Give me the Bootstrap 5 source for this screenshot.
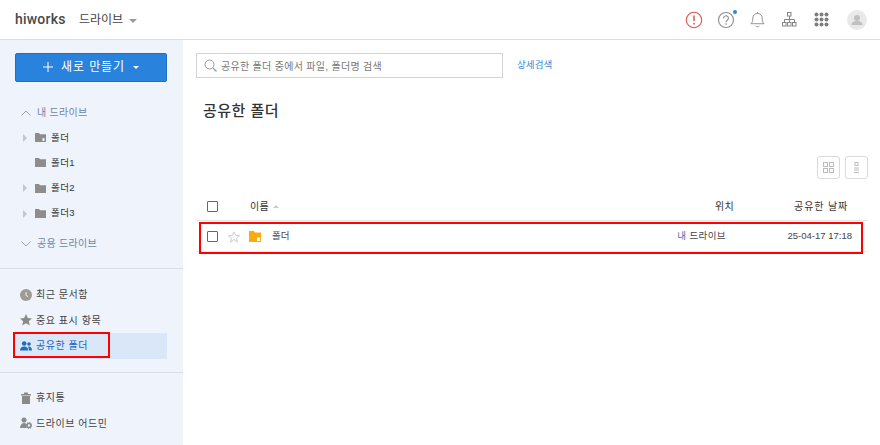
<!DOCTYPE html>
<html lang="ko">
<head>
<meta charset="utf-8">
<title>공유한 폴더</title>
<link href="https://cdn.jsdelivr.net/npm/bootstrap@5.3.0/dist/css/bootstrap.min.css" rel="stylesheet">
<style>
html,body{height:100%;overflow:hidden}
body{font-family:"Liberation Sans","Noto Sans CJK KR",sans-serif;font-size:10px;color:#333;background:#fff}
.top-bar{height:40px;border-bottom:1px solid #ddd;padding:0 13px 0 15px}
.logo-text{font-family:Roboto,"Noto Sans",sans-serif;font-size:14px;font-weight:500;color:#4a4a4a;letter-spacing:.2px;width:64px}
.app-name{font-size:12px;color:#444}
.caret-down{width:0;height:0;border-left:4px solid transparent;border-right:4px solid transparent;border-top:4px solid #999;margin-left:6px;margin-top:2px}
.ticon{display:block}
.page-body{height:405px}
.side-pane{width:183px;background:#eef3fc;flex:none}
.make-btn{margin:13px 16px 0 15px;height:29px;padding:0 0 2px;background:#2982dc;border:1px solid #1d6fc0;border-radius:2px;color:#fff;font-size:12px;letter-spacing:.9px;font-weight:400}
.make-btn .caret-down{border-top-color:#fff;border-left-width:3px;border-right-width:3px;border-top-width:3px;margin-left:8px;margin-top:1px}
.drive-head{height:25px;color:#6f86a3;font-size:10px;padding-left:21px;letter-spacing:.3px}
.drive-head svg{margin-right:6px}
.first-head{margin-top:18px}
.second-head{margin-top:5px}
.folder-row{height:25.3px;padding-left:23px;color:#333;font-size:9.5px;letter-spacing:.4px}
.tri{width:0;height:0;border-top:4px solid transparent;border-bottom:4px solid transparent;border-left:4px solid #c6c6c6;margin-right:8px}
.tri-none{width:4px;margin-right:8px}
.folder-row svg{margin-right:5px}
.side-line{height:1px;background:#d8dfea}
.line-one{margin:12px 0 13px}
.line-two{margin:13.500px 0 12px}
.side-item{height:25.500px;padding-left:20px;color:#444;font-size:10px;margin-right:16px;letter-spacing:.55px}
.side-item svg{margin-right:4px;flex:none}
.side-item.is-current{background:#d9e7f8;color:#1565b8;margin-left:15px;padding-left:5px}
.main-pane{min-width:0;padding:0 12px 0 13px}
.search-box{width:307px;height:25px;border:1px solid #d4d4d4;padding:1px 0 0 7px;color:#777;font-size:10px;letter-spacing:.3px;margin-top:13px}
.search-box svg{margin-right:4px;margin-top:-2px}
.more-link{color:#3d88d5;font-size:9.500px;letter-spacing:.1px;margin-left:14px;margin-top:13px;text-decoration:none;line-height:24px}
.page-title{font-size:15px;font-weight:500;color:#333;letter-spacing:.5px;margin:23px 0 0 7px;line-height:20px}
.view-btns{gap:5px;margin-top:35px}
.view-btn{width:23px;height:23px;border:1px solid #d9d9d9;border-radius:3px}
.list-head{height:30px;margin-top:12px;padding-top:1px;border-bottom:1px solid #e6e6e6;font-size:10px;letter-spacing:.3px;color:#333}
.list-row{height:31px;padding-top:1px;border-bottom:1px solid #eee;font-size:9.500px;color:#444}
.chk{width:11px;height:11px;border:1px solid #666;border-radius:1px;margin-left:11px;flex:none;display:block}
.col-star{width:22px;padding-left:10px;flex:none;line-height:0}
.col-name{flex:1;min-width:0}
.col-place{width:129px;text-align:right}
.col-date{width:114px;text-align:right}
.name-head{margin-left:32px}
.head-place{padding-right:20px}
.head-date{padding-right:20px;letter-spacing:.85px}
.row-place{padding-right:28px;letter-spacing:.4px}
.row-date{padding-right:16px}
.row-folder{margin:0 11px 0 9px}
.mine-tag{color:#3b6fb0}
.sort-up{display:inline-block;width:0;height:0;border-left:3px solid transparent;border-right:3px solid transparent;border-bottom:3px solid #ccc;margin-left:4px;vertical-align:2px}
.mark-a{position:absolute;left:13px;top:332px;width:97px;height:26px;border:2px solid #f00}
.mark-b{position:absolute;left:199px;top:222px;width:664px;height:32px;border:2px solid #f00}
.dot{position:absolute;right:-2px;top:-1px;width:4px;height:4px;border-radius:50%;background:#2a87e0}
.ico-wrap{position:relative;display:block}
.gap-14{margin-right:14px}
.gap-15{margin-right:15px}
.gap-17{margin-right:17px}
.gap-19{margin-right:18px}
</style>
</head>
<body>
<header class="top-bar d-flex align-items-center">
  <span class="logo-text">hiworks</span>
  <span class="app-name">드라이브</span><span class="caret-down"></span>
  <div class="ms-auto d-flex align-items-center">
    <svg class="ticon gap-14" width="18" height="18" viewBox="0 0 18 18"><circle cx="9" cy="9" r="7.700" fill="none" stroke="#e0524f" stroke-width="1.100"/><path d="M9 4.500v5.600" stroke="#e0524f" stroke-width="1.500"/><circle cx="9" cy="12.700" r=".9" fill="#e0524f"/></svg>
    <span class="ico-wrap gap-15"><svg class="ticon" width="18" height="18" viewBox="0 0 18 18"><circle cx="9" cy="9" r="7.500" fill="none" stroke="#8c8c8c" stroke-width="1.100"/><path d="M6.600 7.200a2.400 2.400 0 1 1 3.700 2c-.9.600-1.300 1-1.300 2" fill="none" stroke="#8c8c8c" stroke-width="1.100"/><circle cx="9" cy="13" r=".8" fill="#8c8c8c"/></svg><span class="dot"></span></span>
    <svg class="ticon gap-17" width="15" height="19" viewBox="0 0 16 19"><path d="M1 14c1.500-1.500 2-2.500 2-6a5 5 0 0 1 10 0c0 3.500.5 4.500 2 6z" fill="none" stroke="#8c8c8c"/><path d="M8 3V1.500M6 16.500c1 1 3 1 4 0" fill="none" stroke="#8c8c8c"/></svg>
    <svg class="ticon gap-17" width="15" height="15" viewBox="0 0 15 15"><g fill="none" stroke="#858585"><rect x="5.500" y=".5" width="3.500" height="3.500"/><rect x=".5" y="10.500" width="3.500" height="3.500"/><rect x="5.500" y="10.500" width="3.500" height="3.500"/><rect x="10.500" y="10.500" width="3.500" height="3.500"/><path d="M7.500 4v6.500M2.500 10.500V7.500h10v3"/></g></svg>
    <svg class="ticon gap-19" width="15" height="15" viewBox="0 0 15 15" fill="#7d7d7d"><circle cx="2.500" cy="2.500" r="2"/><circle cx="7.500" cy="2.500" r="2"/><circle cx="12.500" cy="2.500" r="2"/><circle cx="2.500" cy="7.500" r="2"/><circle cx="7.500" cy="7.500" r="2"/><circle cx="12.500" cy="7.500" r="2"/><circle cx="2.500" cy="12.500" r="2"/><circle cx="7.500" cy="12.500" r="2"/><circle cx="12.500" cy="12.500" r="2"/></svg>
    <svg class="ticon" width="20" height="20" viewBox="0 0 20 20"><circle cx="10" cy="10" r="10" fill="#e9e9e9"/><circle cx="10" cy="8" r="3" fill="#c0c0c0"/><path d="M4.500 15c0-3 2.500-4 5.500-4s5.500 1 5.500 4z" fill="#c0c0c0"/></svg>
  </div>
</header>
<div class="page-body d-flex">
  <aside class="side-pane d-flex flex-column">
    <button type="button" class="make-btn d-flex align-items-center justify-content-center">
      <svg width="10" height="10" viewBox="0 0 10 10" class="me-1"><path d="M5 0v10M0 5h10" stroke="#fff"/></svg>
      <span class="ms-1">새로 만들기</span><span class="caret-down"></span>
    </button>
    <div class="drive-head first-head d-flex align-items-center"><svg width="10" height="6" viewBox="0 0 10 6"><path d="M.5 5.500 5 1l4.500 4.500" fill="none" stroke="#9aa5b1"/></svg>내 드라이브</div>
    <div class="folder-row d-flex align-items-center"><span class="tri"></span><svg width="11" height="9" viewBox="0 0 11 9"><path d="M0 0h4l1 1.300h6V9H0z" fill="#8d8d8d"/><rect x="7.500" y="5" width="2" height="3" fill="#eef3fc"/></svg>폴더</div>
    <div class="folder-row d-flex align-items-center"><span class="tri-none"></span><svg width="11" height="9" viewBox="0 0 11 9"><path d="M0 0h4l1 1.300h6V9H0z" fill="#8d8d8d"/></svg>폴더1</div>
    <div class="folder-row d-flex align-items-center"><span class="tri"></span><svg width="11" height="9" viewBox="0 0 11 9"><path d="M0 0h4l1 1.300h6V9H0z" fill="#8d8d8d"/></svg>폴더2</div>
    <div class="folder-row d-flex align-items-center"><span class="tri"></span><svg width="11" height="9" viewBox="0 0 11 9"><path d="M0 0h4l1 1.300h6V9H0z" fill="#8d8d8d"/></svg>폴더3</div>
    <div class="drive-head second-head d-flex align-items-center"><svg width="10" height="6" viewBox="0 0 10 6"><path d="M.5.500 5 5 9.500.5" fill="none" stroke="#9aa5b1"/></svg>공용 드라이브</div>
    <div class="side-line line-one"></div>
    <div class="side-item d-flex align-items-center"><svg width="12" height="12" viewBox="0 0 12 12"><circle cx="6" cy="6" r="6" fill="#a09a94"/><path d="M6 3v3.500l2 1" fill="none" stroke="#eef3fc"/></svg>최근 문서함</div>
    <div class="side-item d-flex align-items-center"><svg width="12" height="12" viewBox="0 0 12 12"><path d="M6 0l1.800 4 4.200.4-3.200 2.800 1 4.300L6 9.300 2.200 11.500l1-4.300L0 4.400 4.200 4z" fill="#8a8a8a"/></svg>중요 표시 항목</div>
    <div class="side-item is-current d-flex align-items-center"><svg width="12" height="10" viewBox="0 0 12 10" fill="#1f6cbb"><circle cx="4.200" cy="2.500" r="2.300"/><circle cx="9" cy="3" r="1.800"/><path d="M0 9.500C0 6.800 2 5.500 4.200 5.500S8.400 6.800 8.400 9.500zM9 9.500C9 7.500 8.500 6.500 7.800 5.600 10 5 12 6.500 12 9.500z"/></svg>공유한 폴더</div>
    <div class="side-line line-two"></div>
    <div class="side-item d-flex align-items-center"><svg width="12" height="12" viewBox="0 0 12 12"><path d="M1 2h10v1.500H1zM4 .5h4V2H4zM2 4h8v8H2z" fill="#8a8a8a"/></svg>휴지통</div>
    <div class="side-item d-flex align-items-center"><svg width="12" height="12" viewBox="0 0 12 12"><circle cx="4" cy="3" r="2.500" fill="#8a8a8a"/><path d="M0 11c0-3 2-5 4-5 1 0 2 .5 2.500 1v4z" fill="#8a8a8a"/><circle cx="9" cy="8.500" r="2" fill="none" stroke="#8a8a8a" stroke-width="1.500"/><circle cx="9" cy="8.500" r="3" fill="none" stroke="#8a8a8a" stroke-width="1" stroke-dasharray="1.200 1.150"/></svg>드라이브 어드민</div>
  </aside>
  <main class="main-pane flex-grow-1">
    <div class="d-flex">
      <div class="search-box d-flex align-items-center"><svg width="13" height="13" viewBox="0 0 13 13"><circle cx="5.500" cy="5.500" r="4.500" fill="none" stroke="#999"/><path d="M9 9l3.500 3.500" stroke="#999" stroke-width="1.200"/></svg>공유한 폴더 중에서 파일, 폴더명 검색</div>
      <a class="more-link" href="#">상세검색</a>
    </div>
    <h1 class="page-title">공유한 폴더</h1>
    <div class="view-btns d-flex justify-content-end">
      <div class="view-btn d-flex align-items-center justify-content-center"><svg width="11" height="11" viewBox="0 0 11 11"><g fill="none" stroke="#bbb"><rect x=".5" y=".5" width="4" height="4"/><rect x="6.500" y=".5" width="4" height="4"/><rect x=".5" y="6.500" width="4" height="4"/><rect x="6.500" y="6.500" width="4" height="4"/></g></svg></div>
      <div class="view-btn d-flex align-items-center justify-content-center"><svg width="5" height="11" viewBox="0 0 5 11"><g fill="none" stroke="#bbb"><rect x="1" y=".5" width="3" height="3"/><path d="M0 6h5M0 8h5M0 10.500h5"/></g></svg></div>
    </div>
    <div class="list-head d-flex align-items-center">
      <span class="chk"></span>
      <div class="col-name name-head">이름<span class="sort-up"></span></div>
      <div class="col-place head-place">위치</div>
      <div class="col-date head-date">공유한 날짜</div>
    </div>
    <div class="list-row d-flex align-items-center">
      <span class="chk"></span>
      <div class="col-star"><svg width="12" height="12" viewBox="0 0 12 12"><path d="M6 .8l1.600 3.600 3.900.4-2.900 2.600.8 3.800L6 8.300l-3.400 2.900.8-3.800L.5 4.800l3.900-.4z" fill="none" stroke="#ccc"/></svg></div>
      <div class="col-name d-flex align-items-center"><svg class="row-folder" width="12" height="11" viewBox="0 0 12 11"><path d="M0 0h5l1 1.500h6V11H0z" fill="#f9ab14"/><rect x="8" y="6.500" width="3" height="3.500" fill="#fff"/></svg>폴더</div>
      <div class="col-place row-place"><span class="mine-tag">내</span> 드라이브</div>
      <div class="col-date row-date">25-04-17 17:18</div>
    </div>
  </main>
</div>
<div class="mark-a"></div>
<div class="mark-b"></div>
</body>
</html>
